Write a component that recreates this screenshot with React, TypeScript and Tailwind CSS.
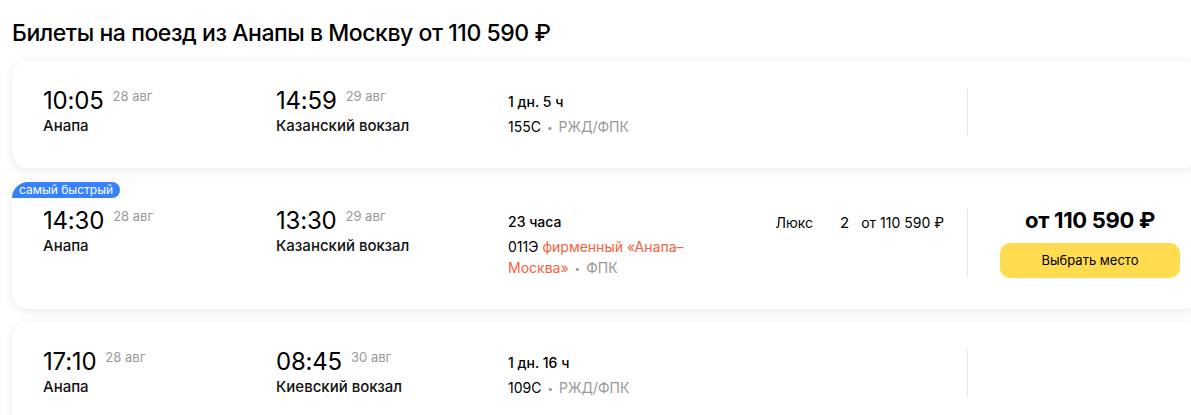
import React from "react";

type Train = {
  dep: string;
  depDate: string;
  depSt: string;
  arr: string;
  arrDate: string;
  arrSt: string;
  dur: string;
  num: string;
  name?: [string, string];
  carrier: string;
  fast?: boolean;
  price?: boolean;
};

const trains: Train[] = [
  { dep: "10:05", depDate: "28 авг", depSt: "Анапа", arr: "14:59", arrDate: "29 авг", arrSt: "Казанский вокзал", dur: "1 дн. 5 ч", num: "155С", carrier: "РЖД/ФПК" },
  { dep: "14:30", depDate: "28 авг", depSt: "Анапа", arr: "13:30", arrDate: "29 авг", arrSt: "Казанский вокзал", dur: "23 часа", num: "011Э", name: ["фирменный «Анапа–", "Москва»"], carrier: "ФПК", fast: true, price: true },
  { dep: "17:10", depDate: "28 авг", depSt: "Анапа", arr: "08:45", arrDate: "30 авг", arrSt: "Киевский вокзал", dur: "1 дн. 16 ч", num: "109С", carrier: "РЖД/ФПК" },
];

function Point({ time, date, st }: { time: string; date: string; st: string }) {
  return (
    <div className="flex flex-col">
      <div className="flex items-start">
        <span className="text-[24px] leading-[31px] text-[#000] tracking-[-0.2px]">{time}</span>
        <span className="ml-[9px] mt-[2px] text-[13px] leading-[18px] text-[#999]">{date}</span>
      </div>
      <div className="text-[15px] leading-[20px] font-[500] text-[#111]">{st}</div>
    </div>
  );
}

function Card({ t }: { t: Train }) {
  return (
    <div className="relative w-[1188px] bg-white rounded-[16px] shadow-[0_2px_10px_rgba(0,0,0,0.09)] flex pl-[31px] pt-[24px] pb-[30px]">
      {t.fast && (
        <div className="absolute left-0 top-[1px] h-[16px] px-[7px] bg-[#3581ff] text-white text-[12px] leading-[16px] rounded-tl-[16px] rounded-br-[8px] rounded-tr-[8px]">
          самый быстрый
        </div>
      )}
      <div className="w-[233px]">
        <Point time={t.dep} date={t.depDate} st={t.depSt} />
      </div>
      <div className="w-[232px]">
        <Point time={t.arr} date={t.arrDate} st={t.arrSt} />
      </div>
      <div className="w-[232px] pt-[7px]">
        <div className="text-[14px] leading-[20px] font-[500] text-[#000]">{t.dur}</div>
        <div className="text-[14px] leading-[21px] text-[#000] mt-[4px]">
          {t.num}
          {t.name && (
            <span className="text-[#f4623f]">
              {" "}
              {t.name[0]}
              <br />
              {t.name[1]}
            </span>
          )}
          <span className="text-[#999] mx-[6px] text-[10px] align-[1px]">•</span>
          <span className="text-[#999]">{t.carrier}</span>
        </div>
      </div>
      <div className="flex-1 flex justify-end pr-[23px] pt-[8px]">
        {t.price && (
          <div className="flex items-start text-[14px] leading-[20px] text-[#000]">
            <span className="mr-[27px]">Люкс</span>
            <span className="text-[15px] mr-[12px]">2</span>
            <span>от 110 590 ₽</span>
          </div>
        )}
      </div>
      <div className="w-px bg-[#e6e6e6] mt-[4px] mb-[3px]" />
      <div className="w-[232px] pl-[32px] pr-[20px] flex flex-col items-center">
        {t.price && (
          <>
            <div className="text-[22px] leading-[28px] font-bold text-[#000] tracking-[-0.3px] mt-[1px]">от 110 590 ₽</div>
            <button className="mt-[9px] w-[180px] h-[35px] rounded-[10px] bg-[#ffdc4f] text-[13px] text-[#000]">
              Выбрать место
            </button>
          </>
        )}
      </div>
    </div>
  );
}

export default function App() {
  return (
    <div className="w-[1191px] h-[415px] overflow-hidden bg-white" style={{ fontFamily: "Inter, 'Noto Sans', sans-serif" }}>
      <h1 className="pl-[12px] pt-[17px] text-[23px] leading-[32px] font-medium text-[#000] tracking-[-0.45px]">
        Билеты на поезд из Анапы в Москву от 110 590 ₽
      </h1>
      <div className="pl-[12px] mt-[12px] flex flex-col gap-[13px]">
        {trains.map((t, i) => (
          <Card key={i} t={t} />
        ))}
      </div>
    </div>
  );
}
